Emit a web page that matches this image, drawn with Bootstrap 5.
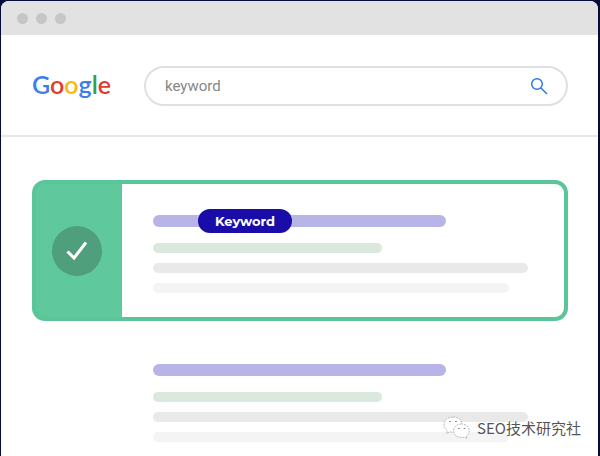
<!DOCTYPE html>
<html lang="en">
<head>
<meta charset="utf-8">
<meta name="viewport" content="width=device-width, initial-scale=1">
<title>Keyword search</title>
<link href="https://cdn.jsdelivr.net/npm/bootstrap@5.3.0/dist/css/bootstrap.min.css" rel="stylesheet">
<style>
body { background: #060b38; font-family: Roboto, "Noto Sans CJK SC", sans-serif; }
.browser { margin: 1px 2px 0 1px; border-radius: 8px 8px 0 0; }
.titlebar { height: 34px; background: #e2e2e2; padding-left: 16px; gap: 8px; }
.window-dot { width: 11px; height: 11px; background: #c6c6c6; }
.searchbar { height: 102px; padding: 2px 30px 0 31px; border-bottom: 2px solid #e8e8ec; gap: 34px; }
.wordmark { width: 78px; font: 600 25px/40px Lato, sans-serif; color: #3d7eed; padding-bottom: 4px; }
.wordmark:hover { color: #3d7eed; }
.g-red { color: #e33b2e; }
.g-yellow { color: #fbb90f; }
.g-green { color: #2da14c; }
.search-field { height: 40px; border: 2px solid #e0e0e4; padding: 0 17px 0 19px; }
.search-field input { font-size: 15px; line-height: 24px; color: #868686; background: none; outline: 0; }
.search-field svg, .search-field button { display: block; }
.results { padding: 43px 30px 0 31px; }
.featured { border: 4px solid #5ac598; border-radius: 13px; min-height: 141px; background: #5fc99d; }
.verdict { width: 86px; padding-right: 4px; }
.verdict-disc { width: 50px; height: 50px; background: #4f9f7c; }
.featured-copy { padding: 31px 36px 0 31px; }
.plain-copy { padding: 43px 40px 13px 121px; }
.bar { height: 10px; margin-bottom: 10px; }
.bar-title { height: 12px; width: 78%; background: #b9b4e7; margin-bottom: 16px; }
.bar-url { width: 61%; background: #dae8dd; }
.bar-long { width: 100%; background: #e9e9e9; }
.bar-short { width: 95%; background: #f4f4f4; margin-bottom: 0; }
.keyword-pill { left: 45px; top: -6px; width: 94px; height: 24px; background: #190ca8; font: 700 13px/24px Montserrat, Inter, sans-serif; }
.watermark { right: 19px; bottom: 15px; gap: 6px; font: 15px/26px "Noto Sans CJK SC", sans-serif; color: #555; text-shadow: -1px -1px 0 #fff; }
</style>
</head>
<body class="min-vh-100 d-flex flex-column position-relative overflow-hidden">
<div class="browser bg-white flex-grow-1 overflow-hidden">
  <div class="titlebar d-flex align-items-center">
    <span class="window-dot rounded-circle"></span>
    <span class="window-dot rounded-circle"></span>
    <span class="window-dot rounded-circle"></span>
  </div>
  <header class="searchbar d-flex align-items-center">
    <a href="#" class="wordmark text-decoration-none flex-shrink-0" aria-label="Google">G<span class="g-red">o</span><span class="g-yellow">o</span>g<span class="g-green">l</span><span class="g-red">e</span></a>
    <form class="search-field rounded-pill d-flex align-items-center flex-grow-1">
      <input type="text" class="border-0 p-0 flex-grow-1" value="keyword" aria-label="Search">
      <button type="button" class="border-0 bg-transparent p-0" aria-label="Submit search">
        <svg width="20" height="20" viewBox="0 0 20 20" fill="none" stroke="#2a78ee" stroke-width="1.5"><circle cx="8" cy="8" r="5.3"/><path d="M12 12l6 6"/></svg>
      </button>
    </form>
  </header>
  <main class="results">
    <article class="featured d-flex overflow-hidden">
      <div class="verdict d-flex align-items-center justify-content-center flex-shrink-0">
        <span class="verdict-disc rounded-circle d-flex align-items-center justify-content-center">
          <svg width="24" height="24" viewBox="0 0 24 24" fill="none" stroke="#fff" stroke-width="3"><path d="M2.500 12.500l6.500 6.500L21 3.500"/></svg>
        </span>
      </div>
      <div class="featured-copy bg-white flex-grow-1">
        <div class="bar bar-title rounded-pill position-relative"><span class="keyword-pill position-absolute rounded-pill text-white text-center">Keyword</span></div>
        <div class="bar bar-url rounded-pill"></div>
        <div class="bar bar-long rounded-pill"></div>
        <div class="bar bar-short rounded-pill"></div>
      </div>
    </article>
    <article class="plain-copy">
      <div class="bar bar-title rounded-pill"></div>
      <div class="bar bar-url rounded-pill"></div>
      <div class="bar bar-long rounded-pill"></div>
      <div class="bar bar-short rounded-pill"></div>
    </article>
  </main>
</div>
<div class="watermark position-absolute d-flex align-items-center">
  <svg width="28" height="24" viewBox="0 0 28 24" fill="#fff" stroke="#aaa" stroke-width=".8"><path stroke-dasharray="2 1" d="M10 1C4.500 1 1 4.500 1 8.500c0 2.500 1.200 4.500 3.300 6L3.500 17.500l3.200-1.700c1.200.4 2.300.5 3.600.4C16 16 19 12.500 19 8.500 19 4 15 1 10 1z"/><path stroke-dasharray="2 1" d="M18.500 8c-4.500 0-8 3-8 6.800s3.500 6.700 8 6.700c1 0 2-.1 2.900-.4l2.700 1.500-.7-2.500c1.800-1.300 2.900-3.100 2.900-5.300C26.300 11 23 8 18.500 8z"/><path stroke="#777" d="M6 5.500h2M12 5.500h2M15 12.500h2M20.500 12.500h2"/></svg>
  <span>SEO技术研究社</span>
</div>
<script src="https://cdn.jsdelivr.net/npm/bootstrap@5.3.0/dist/js/bootstrap.bundle.min.js"></script>
</body>
</html>
